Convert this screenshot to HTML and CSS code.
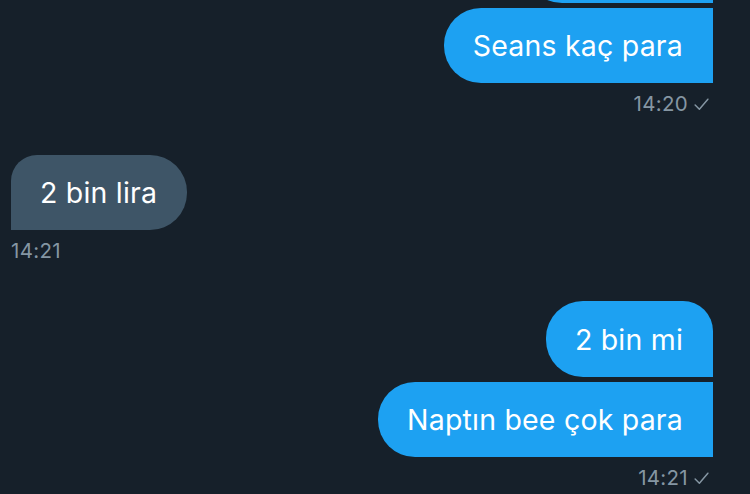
FILE: index.html
```html
<!DOCTYPE html>
<html lang="tr">
<head>
<meta charset="utf-8">
<link rel="stylesheet" href="styles.css">
</head>
<body>
<div class="chat">
  <div class="group sent first-partial">
    <div class="bubble sent-bubble top-round partial" aria-hidden="true"></div>
    <div class="bubble sent-bubble">Seans kaç para</div>
    <div class="meta sent-meta">14:20 <svg class="check" viewBox="0 0 16 14" width="17" height="15"><path d="M2 7.5 L6 11.5 L14 2" fill="none" stroke="currentColor" stroke-width="1.4" stroke-linecap="round" stroke-linejoin="round"/></svg></div>
  </div>
  <div class="group received">
    <div class="bubble recv-bubble">2 bin lira</div>
    <div class="meta recv-meta">14:21</div>
  </div>
  <div class="group sent last">
    <div class="bubble sent-bubble top-round">2 bin mi</div>
    <div class="bubble sent-bubble">Naptın bee çok para</div>
    <div class="meta sent-meta">14:21 <svg class="check" viewBox="0 0 16 14" width="17" height="15"><path d="M2 7.5 L6 11.5 L14 2" fill="none" stroke="currentColor" stroke-width="1.4" stroke-linecap="round" stroke-linejoin="round"/></svg></div>
  </div>
</div>
</body>
</html>
```
FILE: styles.css
```css
html, body {
  margin: 0;
  padding: 0;
  background: #16202a;
  width: 750px;
  height: 494px;
  overflow: hidden;
}
.chat {
  display: flex;
  flex-direction: column;
  padding: 0 37px 0 11px;
  font-family: "Inter", "Noto Sans", sans-serif;
  margin-top: -73px;
}
.group {
  display: flex;
  flex-direction: column;
  gap: 5px;
}
.group.sent { align-items: flex-end; }
.group.received { align-items: flex-start; margin-top: 40px; }
.group.last { margin-top: 39px; }
.bubble {
  box-sizing: border-box;
  height: 75px;
  display: flex;
  align-items: center;
  font-size: 28.5px;
  color: #ffffff;
  letter-spacing: 0.2px;
  white-space: nowrap;
}
.sent-bubble {
  background: #1da1f2;
  padding: 0 30px 0 29px;
  border-radius: 37px 0 0 37px;
}
.sent-bubble.top-round {
  border-radius: 37px 30px 0 37px;
  height: 76px;
}
.partial {
  width: 188px;
}
.recv-bubble {
  background: #3e5567;
  padding: 0 30px 0 29px;
  border-radius: 26px 37px 37px 0;
}
.meta {
  font-size: 20.5px;
  line-height: 22px;
  color: #8596a3;
  display: flex;
  align-items: center;
  gap: 5px;
  margin-top: 5px;
  letter-spacing: 0.3px;
}
.sent-meta { padding-right: 3px; }
.check { color: #8596a3; }
```
